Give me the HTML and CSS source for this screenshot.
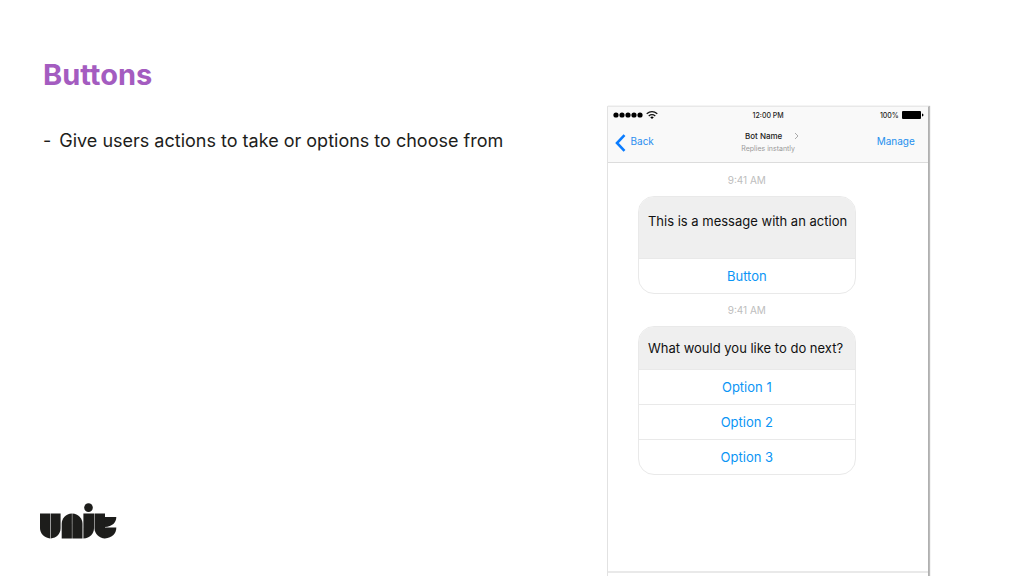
FILE: index.html
```html
<!DOCTYPE html>
<html lang="en">
<head>
    <meta charset="UTF-8">
    <meta name="viewport" content="width=device-width, initial-scale=1.0">
    <title>Buttons</title>
    <link rel="stylesheet" href="styles.css">
</head>
<body>
    <main class="slide">
        <!-- Slide text -->
        <section class="copy">
            <h1>Buttons</h1>
            <ul class="points">
                <li>Give users actions to take or options to choose from</li>
            </ul>
            <svg class="logo" viewBox="0 0 78 36" role="img" aria-label="Unit">
                <path d="M0 10.5h10.2v25C4 34.8 0 30.5 0 25z"/>
                <path d="M10.7 10.5h9.9V25c0 6-4 9.8-9.9 10.5z"/>
                <path d="M21.7 35.5V21c0-6 4-10 10.2-10.500v25z"/>
                <path d="M32.3 10.5c6 .5 10.2 4.5 10.2 10.5v14.5H32.300z"/>
                <circle cx="48.500" cy="4.600" r="4.300"/>
                <path d="M43.400 10.500h10.600V25c0 6-4 10-10.600 10.500z"/>
                <path d="M54.500 10.500h10.500v25c-6-.5-10.500-4.500-10.500-10.500z"/>
                <path d="M64.900 14h11.400c0 5.500-4 9.500-11.400 10z"/>
                <path d="M64.900 24.600h11.400c0 6-4 10.400-11.400 10.900z"/>
            </svg>
        </section>

        <!-- Phone screen -->
        <section class="phone">
            <header class="topbar">
                <div class="status">
                    <span class="signal">
                        <svg width="30" height="8" viewBox="0 0 30 8">
                            <circle cx="3" cy="4" r="2.6"/>
                            <circle cx="9" cy="4" r="2.6"/>
                            <circle cx="15" cy="4" r="2.6"/>
                            <circle cx="21" cy="4" r="2.6"/>
                            <circle cx="27" cy="4" r="2.6"/>
                        </svg>
                        <svg width="12" height="8" viewBox="0 0 12 8">
                            <path class="wave" d="M.7 2.8Q6-1.4 11.3 2.8M2.7 5Q6 2.4 9.3 5"/>
                            <path d="M4.2 6.2Q6 4.8 7.8 6.2L6 8z"/>
                        </svg>
                    </span>
                    <span>12:00 PM</span>
                    <span class="battery">100%
                        <svg width="22" height="8" viewBox="0 0 22 8">
                            <rect width="19" height="8" rx="1"/>
                            <path d="M20 2.5q1.5.2 1.5 1.5T20 5.5z"/>
                        </svg>
                    </span>
                </div>
                <div class="nav">
                    <button class="back">
                        <svg width="11" height="18" viewBox="0 0 11 18"><path d="M9.5 1.2 2 9l7.5 7.8"/></svg>
                        <span>Back</span>
                    </button>
                    <div class="bot">
                        <p class="bot-name">Bot Name
                            <svg width="5" height="8" viewBox="0 0 5 8"><path d="M1 1l3 3-3 3"/></svg>
                        </p>
                        <p class="bot-reply">Replies instantly</p>
                    </div>
                    <button class="manage">Manage</button>
                </div>
            </header>

            <div class="chat">
                <time>9:41 AM</time>
                <article class="card">
                    <p class="message tall">This is a message with an action</p>
                    <button>Button</button>
                </article>
                <time>9:41 AM</time>
                <article class="card">
                    <p class="message">What would you like to do next?</p>
                    <button>Option 1</button>
                    <button>Option 2</button>
                    <button>Option 3</button>
                </article>
            </div>
            <footer class="composer"></footer>
        </section>
    </main>
</body>
</html>
```
FILE: styles.css
```css
* {
    box-sizing: border-box;
}

body {
    margin: 0;
    background: #fff;
    color: #1d1d1b;
    font-family: "Inter", "Liberation Sans", sans-serif;
}

h1, p, ul {
    margin: 0;
    padding: 0;
}

button {
    padding: 0;
    border: 0;
    background: none;
    font: inherit;
    cursor: pointer;
}

.slide {
    display: flex;
    justify-content: space-between;
    min-height: 100vh;
    padding-right: 9.3%;
}

/* Slide text */
.copy {
    display: flex;
    flex-direction: column;
    flex: 1;
    padding: 58px 0 37px 40px;
}

h1 {
    padding-left: 3px;
    color: #a45cc0;
    font-size: 29px;
    font-weight: 700;
    line-height: 34px;
}

.points {
    margin-top: 37px;
    padding-left: 3px;
    list-style: none;
    font-size: 18px;
    line-height: 24px;
}

.points li {
    display: flex;
    gap: 8px;
}

.points li::before {
    content: "-";
}

.logo {
    width: 78px;
    height: 36px;
    margin-top: auto;
    fill: #1d1d1b;
}

/* Phone screen */
.phone {
    display: flex;
    flex-direction: column;
    width: 34.7%;
    margin-top: 106px;
    border-top: 1px solid #e8e8e8;
    border-left: 1px solid #e2e2e2;
    border-right: 1px solid #b0b0b0;
    box-shadow: 1px 0 1px #bbb;
}

.topbar {
    height: 56px;
    border-bottom: 1px solid #dcdcdc;
    background: #f9f9f9;
}

.status,
.nav {
    display: grid;
    grid-template-columns: 1fr auto 1fr;
    align-items: center;
}

.status {
    height: 16px;
    padding: 0 4px 0 5px;
    font-size: 7px;
    font-weight: 500;
}

.signal,
.battery {
    display: flex;
    align-items: center;
    gap: 3px;
}

.battery {
    justify-content: flex-end;
}

.battery svg {
    fill: #000;
}

.wave {
    fill: none;
    stroke: #111;
    stroke-width: 1.3;
}

.nav {
    height: 36px;
    padding: 0 13px 0 7px;
}

.back {
    display: flex;
    gap: 5px;
    padding-top: 4px;
    color: #2b8ff0;
    font-size: 10px;
    line-height: 14px;
}

.back svg {
    fill: none;
    stroke: #0a7cff;
    stroke-width: 2.6;
}

.bot {
    padding: 2px 0 0 7px;
    text-align: center;
}

.bot-name {
    display: flex;
    align-items: center;
    justify-content: center;
    gap: 12px;
    padding-left: 8px;
    font-size: 8px;
    font-weight: 500;
    line-height: 14px;
}

.bot-name svg {
    fill: none;
    stroke: #aaa;
}

.bot-reply {
    color: #999;
    font-size: 7px;
    line-height: 12px;
}

.manage {
    justify-self: end;
    color: #2490ee;
    font-size: 10px;
    line-height: 16px;
}

/* Conversation */
.chat {
    display: flex;
    flex: 1;
    flex-direction: column;
    padding: 9px 22.5% 0 9.5%;
}

time {
    color: #bdbdbd;
    font-size: 10px;
    line-height: 16px;
    text-align: center;
}

.card {
    margin: 8px 0;
    overflow: hidden;
    border: 1px solid #e9e9e9;
    border-radius: 16px;
}

.message {
    padding: 12px 4px 12px 9px;
    background: #efefef;
    color: #111;
    font-size: 13px;
    line-height: 18px;
}

.tall {
    padding-top: 15px;
    padding-bottom: 28px;
}

.card button {
    display: block;
    width: 100%;
    height: 35px;
    border-top: 1px solid #e9e9e9;
    color: #0a95f5;
    font-size: 13px;
}

.composer {
    height: 5px;
    border-top: 2px solid #e9e9e9;
}
```
